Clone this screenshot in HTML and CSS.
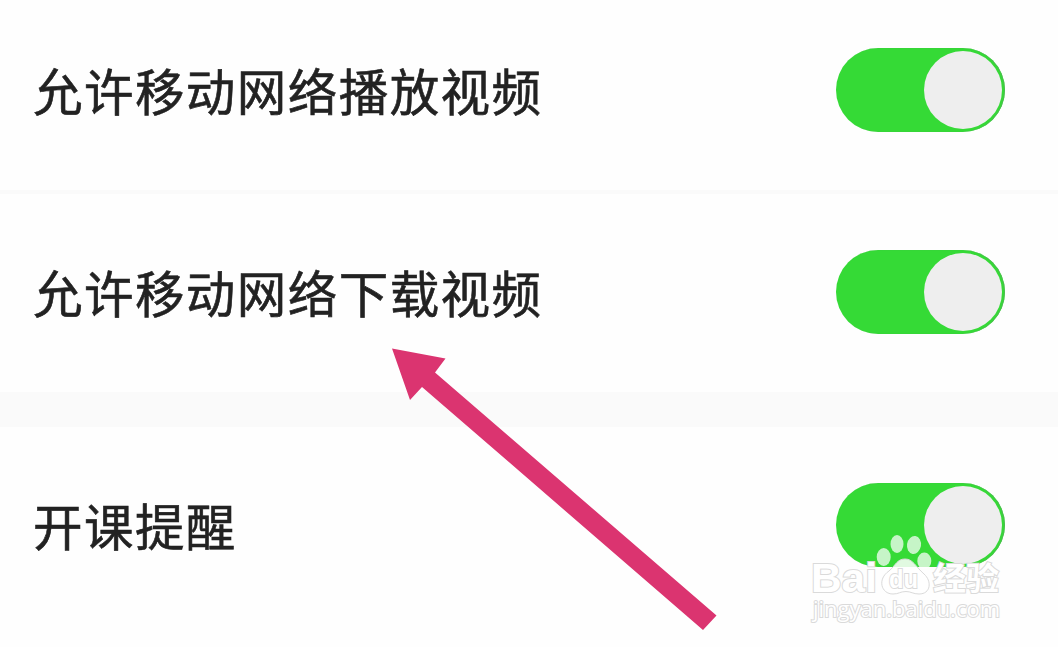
FILE: index.html
```html
<!DOCTYPE html>
<html lang="zh-CN">
<head>
<meta charset="utf-8">
<title>设置</title>
<link rel="stylesheet" href="styles.css">
</head>
<body>
<main class="settings">
  <section class="row row-first"><span class="label">允许移动网络播放视频</span><span class="switch"><span class="knob"></span></span></section>
  <div class="divider"></div>
  <section class="row row-second"><span class="label">允许移动网络下载视频</span><span class="switch"><span class="knob"></span></span></section>
  <div class="gap"></div>
  <section class="row row-third"><span class="label">开课提醒</span><span class="switch"><span class="knob"></span></span></section>
</main>
<svg class="arrow" width="1058" height="647" viewBox="0 0 1058 647"><path d="M392 348.500L445.500 358.500L435 372.500L716.500 615.500L703 630L422 387L410 400Z"/></svg>
<svg class="watermark" width="200" height="100" viewBox="805 530 200 100">
  <g class="toes"><ellipse cx="883.700" cy="557" rx="7" ry="9"/><ellipse cx="897" cy="544" rx="6.500" ry="9"/><ellipse cx="914" cy="545" rx="7" ry="9" transform="rotate(9 914 545)"/><ellipse cx="924.300" cy="561" rx="7" ry="8.500"/></g>
  <path class="pad" d="M905 559C897 559 896 565 889 571C877 579 881 594 893 594C899 594 900 591.500 906 591.500C911 591.500 913 594 919 594C931 594 932 581 924 574C915 566 913 559 905 559Z"/>
  <text class="bai" x="811" y="592" textLength="66" lengthAdjust="spacingAndGlyphs">Bai</text>
  <text class="du" x="889" y="588" textLength="29" lengthAdjust="spacingAndGlyphs">du</text>
  <text class="jy" x="933" y="590" textLength="66" lengthAdjust="spacingAndGlyphs">经验</text>
  <text class="url" x="813" y="617" textLength="187" lengthAdjust="spacingAndGlyphs">jingyan.baidu.com</text>
</svg>
</body>
</html>
```
FILE: styles.css
```css
* { box-sizing: border-box; }
body { margin: 0; width: 1058px; height: 647px; overflow: hidden; position: relative; background: #fefefe; font-family: "Noto Sans CJK SC", sans-serif; }
.settings { display: flex; flex-direction: column; height: 647px; }
.row { display: flex; align-items: center; justify-content: space-between; padding: 0 53.500px 0 33px; }
.row-first { height: 190px; padding-bottom: 10px; }
.divider { height: 4px; background: #fafafa; }
.row-second { height: 198px; padding-bottom: 2px; }
.gap { height: 35px; background: #fafafa; }
.row-third { height: 220px; padding-bottom: 24px; }
.label { font-size: 49.5px; line-height: 76px; letter-spacing: 1.45px; color: #222; -webkit-text-stroke: 0.6px #222; white-space: nowrap; }
.switch { display: flex; justify-content: flex-end; align-items: center; width: 168.5px; height: 84px; border-radius: 42px; padding: 3px; background: #35da36; box-shadow: inset -1px 0 1px #4cbb50; }
.knob { width: 78px; height: 78px; border-radius: 50%; background: #eee; }
.arrow { position: absolute; left: 0; top: 0; fill: #db3470; }
.watermark { position: absolute; left: 805px; top: 530px; fill: #fff; stroke: #dadada; stroke-width: 1px; }
.toes { fill: #fff; fill-opacity: 0.72; stroke: none; }
.pad { fill-opacity: 0.85; }
.bai, .du { font-family: "Liberation Sans", sans-serif; font-weight: bold; font-size: 41px; paint-order: stroke; stroke-width: 2px; }
.du { font-size: 26px; }
.jy { font-size: 32px; font-weight: 700; paint-order: stroke; stroke-width: 2px; }
.url { font-family: "Open Sans", sans-serif; font-size: 21px; paint-order: stroke; stroke-width: 2px; }
```
